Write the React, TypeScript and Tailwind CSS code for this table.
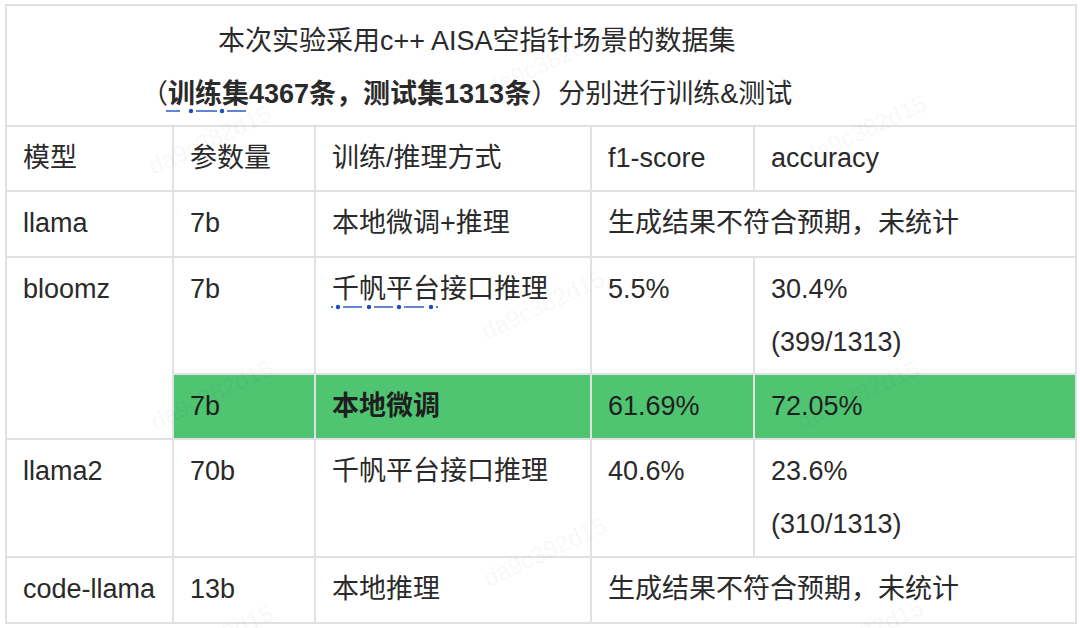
import React from "react";

const font = {
    fontFamily: '"Liberation Sans", "Noto Sans CJK SC", Arial, sans-serif',
};

function SpellMark({ width, dots, dashes, small = [] }: { width: number; dots: number[]; dashes: [number, number][]; small?: number[] }) {
    return (
        <svg width={width} height={6} viewBox={`0 0 ${width} 6`} className="block">
            {dashes.map(([a, b], i) => (
                <line key={i} x1={a} y1={3} x2={b} y2={3} stroke="#1d4fc4" strokeWidth={1.4} />
            ))}
            {dots.map((x) => (
                <circle key={x} cx={x} cy={3} r={2.2} fill="#1d4fc4" />
            ))}
            {small.map((x) => (
                <circle key={x} cx={x} cy={3} r={1} fill="#1d4fc4" />
            ))}
        </svg>
    );
}

const marks = [
    [210, 140],
    [548, 62],
    [865, 130],
    [543, 305],
    [212, 395],
    [858, 395],
    [545, 552],
    [212, 640],
    [862, 634],
];

export default function App() {
    const cell = "border-2 border-[#e0e0e5] px-[16px] pt-[5px] pb-[3px] align-top leading-[53px]";

    return (
        <div className="relative w-[1080px] h-[628px] bg-white overflow-hidden text-[27px] text-[#2a2a2a]" style={font}>
            <div className="pt-[4px] pl-[5px]">
                <table className="table-fixed border-collapse w-[1070px]">
                    <colgroup>
                        <col className="w-[167px]" />
                        <col className="w-[142px]" />
                        <col className="w-[276px]" />
                        <col className="w-[163px]" />
                        <col className="w-[322px]" />
                    </colgroup>
                    <tbody>
                        <tr className="h-[121px]">
                            <td colSpan={5} className="border-2 border-[#e0e0e5] align-top leading-[53px] pt-[9px]">
                                <div className="pl-[211px] whitespace-nowrap">本次实验采用c++ AISA空指针场景的数据集</div>
                                <div className="pl-[134px] whitespace-nowrap">
                                    （
                                    <span className="font-bold">
                                        <span className="relative inline-block">
                                            训练集
                                            <span className="absolute left-[-2px] top-[40px]">
                                                <SpellMark width={80} dots={[25, 56]} dashes={[[0, 14], [30, 51], [61, 80]]} />
                                            </span>
                                        </span>
                                        4367条，测试集1313条
                                    </span>
                                    ）分别进行训练&amp;测试
                                </div>
                            </td>
                        </tr>
                        <tr className="h-[65px]">
                            <td className={cell}>模型</td>
                            <td className={cell}>参数量</td>
                            <td className={cell}>训练/推理方式</td>
                            <td className={cell}>f1-score</td>
                            <td className={cell}>accuracy</td>
                        </tr>
                        <tr className="h-[66px]">
                            <td className={cell}>llama</td>
                            <td className={cell}>7b</td>
                            <td className={cell}>本地微调+推理</td>
                            <td colSpan={2} className={cell}>生成结果不符合预期，未统计</td>
                        </tr>
                        <tr className="h-[117px]">
                            <td rowSpan={2} className={cell}>bloomz</td>
                            <td className={cell}>7b</td>
                            <td className={cell}>
                                <span className="relative inline-block">
                                    千帆平台
                                    <span className="absolute left-[-1px] top-[41px]">
                                        <SpellMark
                                            width={108}
                                            small={[1, 106]}
                                            dots={[7, 38, 68, 100]}
                                            dashes={[[12, 31], [43, 62], [73, 93]]}
                                        />
                                    </span>
                                </span>
                                接口推理
                            </td>
                            <td className={cell}>5.5%</td>
                            <td className={cell}>
                                <div>30.4%</div>
                                <div>(399/1313)</div>
                            </td>
                        </tr>
                        <tr className="h-[65px] bg-[#50c571] text-[#1f1f1f]">
                            <td className={cell}>7b</td>
                            <td className={`${cell} font-semibold`}>本地微调</td>
                            <td className={cell}>61.69%</td>
                            <td className={cell}>72.05%</td>
                        </tr>
                        <tr className="h-[118px]">
                            <td className={cell}>llama2</td>
                            <td className={cell}>70b</td>
                            <td className={cell}>千帆平台接口推理</td>
                            <td className={cell}>40.6%</td>
                            <td className={cell}>
                                <div>23.6%</div>
                                <div>(310/1313)</div>
                            </td>
                        </tr>
                        <tr className="h-[66px]">
                            <td className={cell}>code-llama</td>
                            <td className={cell}>13b</td>
                            <td className={cell}>本地推理</td>
                            <td colSpan={2} className={cell}>生成结果不符合预期，未统计</td>
                        </tr>
                    </tbody>
                </table>
            </div>

            {/* watermark */}
            <div className="pointer-events-none absolute inset-0">
                {marks.map(([x, y], i) => (
                    <span
                        key={i}
                        className="absolute text-[24px] leading-none text-[rgba(0,0,0,0.045)] whitespace-nowrap -translate-x-1/2 -translate-y-1/2 -rotate-[25deg]"
                        style={{ left: x, top: y }}
                    >
                        da9c382d15
                    </span>
                ))}
            </div>
        </div>
    );
}
